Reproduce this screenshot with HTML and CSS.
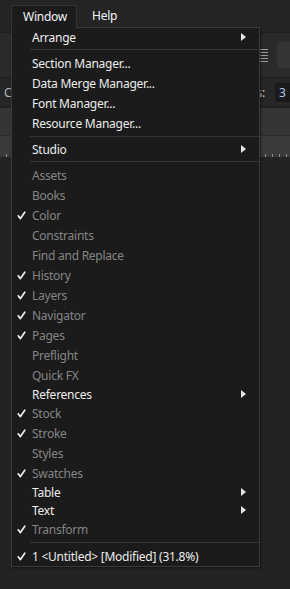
FILE: index.html
```html
<!DOCTYPE html>
<html lang="en">
<head>
    <meta charset="UTF-8">
    <meta name="viewport" content="width=device-width, initial-scale=1.0">
    <title>Window menu</title>
    <link rel="stylesheet" href="styles.css">
</head>
<body>

    <div class="menubar">
        <span class="menubar-item is-open">Window</span>
        <span class="menubar-item">Help</span>
    </div>

    <div class="toolbar">
        <div class="tool-icon">
            <span></span><span></span><span></span><span></span><span></span>
        </div>
        <div class="tool-btn"></div>
    </div>

    <div class="context-bar">
        <span class="context-label left">C</span>
        <span class="context-label right">ns:</span>
        <span class="context-input">3</span>
    </div>

    <div class="panel-band"></div>
    <div class="ruler"></div>
    <div class="canvas"></div>

    <!-- dropdown of the Window menu -->
    <div class="dropdown">
        <div class="item sub enabled"><span class="check"></span><span class="label">Arrange</span><span class="arrow"></span></div>
        <div class="sep"></div>
        <div class="item enabled"><span class="check"></span><span class="label">Section Manager...</span></div>
        <div class="item enabled"><span class="check"></span><span class="label">Data Merge Manager...</span></div>
        <div class="item enabled"><span class="check"></span><span class="label">Font Manager...</span></div>
        <div class="item enabled"><span class="check"></span><span class="label">Resource Manager...</span></div>
        <div class="sep"></div>
        <div class="item sub enabled"><span class="check"></span><span class="label">Studio</span><span class="arrow"></span></div>
        <div class="sep"></div>
        <div class="item"><span class="check"></span><span class="label">Assets</span></div>
        <div class="item"><span class="check"></span><span class="label">Books</span></div>
        <div class="item checked"><span class="check"></span><span class="label">Color</span></div>
        <div class="item"><span class="check"></span><span class="label">Constraints</span></div>
        <div class="item"><span class="check"></span><span class="label">Find and Replace</span></div>
        <div class="item checked"><span class="check"></span><span class="label">History</span></div>
        <div class="item checked"><span class="check"></span><span class="label">Layers</span></div>
        <div class="item checked"><span class="check"></span><span class="label">Navigator</span></div>
        <div class="item checked"><span class="check"></span><span class="label">Pages</span></div>
        <div class="item"><span class="check"></span><span class="label">Preflight</span></div>
        <div class="item"><span class="check"></span><span class="label">Quick FX</span></div>
        <div class="item sub enabled"><span class="check"></span><span class="label">References</span><span class="arrow"></span></div>
        <div class="item checked"><span class="check"></span><span class="label">Stock</span></div>
        <div class="item checked"><span class="check"></span><span class="label">Stroke</span></div>
        <div class="item"><span class="check"></span><span class="label">Styles</span></div>
        <div class="item checked"><span class="check"></span><span class="label">Swatches</span></div>
        <div class="item sub enabled"><span class="check"></span><span class="label">Table</span><span class="arrow"></span></div>
        <div class="item sub enabled"><span class="check"></span><span class="label">Text</span><span class="arrow"></span></div>
        <div class="item checked"><span class="check"></span><span class="label">Transform</span></div>
        <div class="sep"></div>
        <div class="item checked enabled"><span class="check"></span><span class="label">1 &lt;Untitled&gt; [Modified] (31.8%)</span></div>
    </div>

</body>
</html>
```

FILE: styles.css
```css
:root {
    --bg: #232323;
    --menu-bg: #1b1b1b;
    --menu-border: #3a3a3a;
    --sep: #353535;
    --text: #ececec;
    --text-off: #858585;
}

body {
    margin: 0;
    position: relative;
    min-height: 589px;
    background: var(--bg);
    font-family: 'Noto Sans', 'Open Sans', sans-serif;
    font-size: 12px;
    letter-spacing: -0.25px;
    color: var(--text);
    overflow: hidden;
}

/* menu bar */
.menubar {
    height: 32px;
    padding-left: 11px;
    display: flex;
    align-items: flex-start;
    background: #242424;
    box-sizing: border-box;
}

.menubar-item {
    height: 22px;
    margin-top: 5px;
    padding: 0 15px;
    line-height: 21px;
    color: #f2f4f8;
}

.menubar-item.is-open {
    position: relative;
    z-index: 2;
    height: 23px;
    padding: 0 10px 0 11px;
    width: 43px;
    background: var(--menu-bg);
    border: 1px solid #333;
    border-bottom: none;
}

/* toolbar rows behind the menu */
.toolbar {
    height: 45px;
    display: flex;
    justify-content: flex-end;
    align-items: center;
    gap: 9px;
    background: #2a2a2a;
    border-top: 1px solid #1e1e1e;
    box-sizing: border-box;
}

.tool-icon {
    display: flex;
    flex-direction: column;
    gap: 2px;
    width: 12px;
}

.tool-icon span {
    height: 1px;
    background: #9a9a9a;
}

.tool-btn {
    width: 18px;
    height: 26px;
    margin-right: -5px;
    background: #353535;
    border-radius: 4px;
}

.context-bar {
    height: 30px;
    display: flex;
    align-items: center;
    background: #262626;
    border-top: 1px solid #1c1c1c;
    box-sizing: border-box;
}

.context-label {
    color: #a9b4c2;
}

.context-label.left {
    margin-left: 4px;
}

.context-label.right {
    margin-left: auto;
    color: #c8c8c8;
}

.context-input {
    width: 20px;
    height: 19px;
    margin: 0 -9px 0 10px;
    padding-left: 4px;
    line-height: 19px;
    background: #1a1a1a;
    border-radius: 3px;
    color: #a8c8f0;
}

.panel-band {
    height: 27px;
    background: #353535;
    border-top: 1px solid #1e1e1e;
    border-bottom: 1px solid #2a2a2a;
}

.ruler {
    height: 21px;
    background: #3a3a3a repeating-linear-gradient(to right, transparent 0 6px, #8a8a8a 6px 7px) bottom / 100% 3px no-repeat;
}

.canvas {
    height: 440px;
    background: var(--bg);
}

/* dropdown */
.dropdown {
    position: absolute;
    top: 27px;
    left: 11px;
    z-index: 1;
    width: 249px;
    background: var(--menu-bg);
    border: 1px solid var(--menu-border);
    box-shadow: 1px 1px 2px rgba(0, 0, 0, 0.5);
    box-sizing: border-box;
}

.item {
    height: 20px;
    display: flex;
    align-items: center;
    padding-left: 5px;
    color: var(--text-off);
}

.item.enabled {
    color: var(--text);
}

.item.sub {
    height: 18px;
}

.check {
    width: 15px;
    height: 9px;
    flex: none;
}

.checked .check {
    background: url("data:image/svg+xml;utf8,<svg xmlns='http://www.w3.org/2000/svg' width='9' height='9' viewBox='0 0 9 9'><path d='M1.2 4.8 L3.4 7.6 L7.8 1.2' fill='none' stroke='%23eeeeee' stroke-width='1.7' stroke-linecap='round' stroke-linejoin='round'/></svg>") left center no-repeat;
}

.label {
    flex: 1;
    white-space: nowrap;
}

.arrow {
    width: 0;
    height: 0;
    margin-right: 13px;
    border-top: 4px solid transparent;
    border-bottom: 4px solid transparent;
    border-left: 5px solid #e6e6e6;
}

.sep {
    height: 7px;
    margin-left: 18px;
    background: linear-gradient(var(--sep), var(--sep)) 0 3px / 100% 1px no-repeat;
}
```
